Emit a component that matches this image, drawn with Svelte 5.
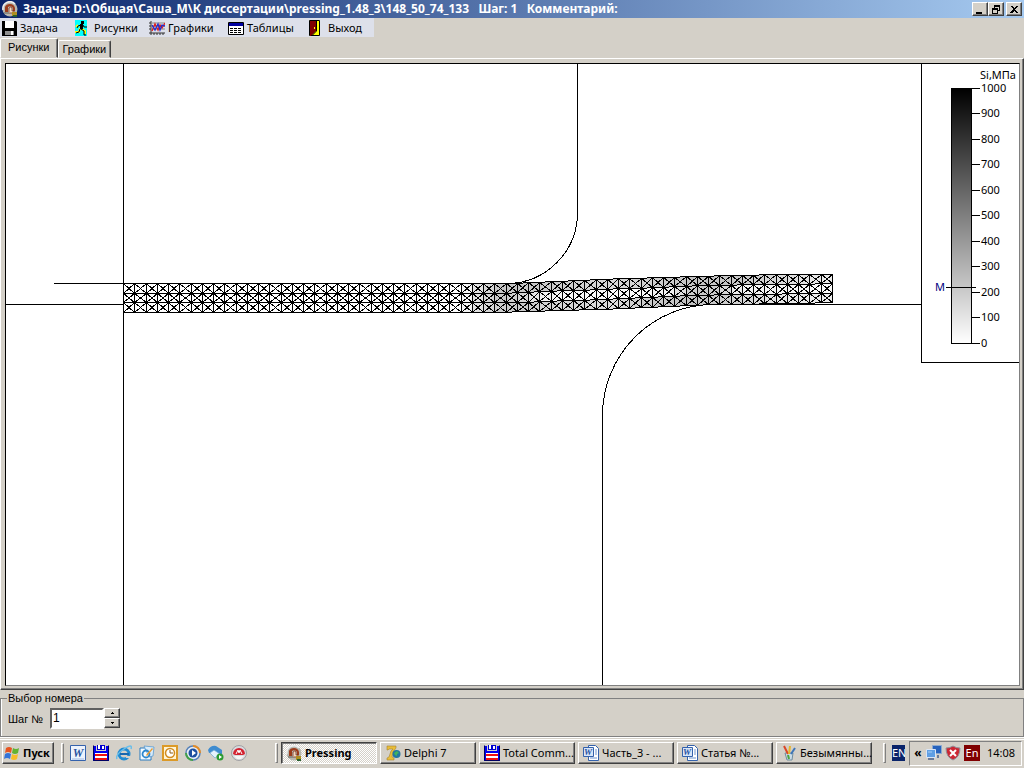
<script lang="ts">
	type Point = [number, number];

	const menu = [
		{ icon: "disk", label: "Задача" },
		{ icon: "runner", label: "Рисунки" },
		{ icon: "chart", label: "Графики" },
		{ icon: "table", label: "Таблицы" },
		{ icon: "door", label: "Выход" },
	];

	const quickLaunch = [
		{ icon: "word", label: "Microsoft Word" },
		{ icon: "commander", label: "Total Commander" },
		{ icon: "explorer", label: "Internet Explorer" },
		{ icon: "mail", label: "Outlook Express" },
		{ icon: "clock", label: "Outlook" },
		{ icon: "player", label: "Media Player" },
		{ icon: "network", label: "Network" },
		{ icon: "gauge", label: "Monitor" },
	];

	const tasks = [
		{ icon: "app", label: "Pressing" },
		{ icon: "delphi", label: "Delphi 7" },
		{ icon: "commander", label: "Total Comm..." },
		{ icon: "worddoc", label: "Часть_3 - ..." },
		{ icon: "worddoc", label: "Статья №..." },
		{ icon: "paint", label: "Безымянны..." },
	];

	let activeTab = $state("Рисунки");
	let step = $state(1);

	// Strip outline: upper and lower boundary of the blank
	const upper: Point[] = [[118, 220], [511, 220], [545, 218], [575, 217], [625, 215], [655, 214], [687, 213], [722, 212], [785, 211], [827, 211]];
	const lower: Point[] = [[118, 249], [490, 249], [530, 248], [560, 247], [595, 246], [625, 245], [655, 243], [685, 242], [715, 241], [785, 240], [827, 239]];

	// Grey level along the strip, one profile per row of elements
	const shades: Point[][] = [
		[[118, 255], [455, 255], [475, 225], [495, 198], [515, 196], [560, 205], [600, 215], [650, 207], [690, 194], [740, 200], [775, 218], [827, 236]],
		[[118, 255], [458, 255], [478, 215], [495, 200], [515, 208], [545, 248], [630, 252], [665, 240], [690, 200], [712, 202], [735, 240], [827, 250]],
		[[118, 255], [455, 255], [475, 222], [495, 205], [515, 200], [560, 212], [610, 220], [650, 200], [690, 194], [725, 205], [775, 230], [827, 238]],
	];

	const COLS = 63;
	const ROWS = 3;

	function interpolate(points: Point[], x: number) {
		for (let i = 1; i < points.length; i++) {
			const [x0, y0] = points[i - 1];
			const [x1, y1] = points[i];
			if (x <= x1) return y0 + ((y1 - y0) * (x - x0)) / (x1 - x0);
		}
		return points[points.length - 1][1];
	}

	function node(col: number, row: number): Point {
		const x = 118 + (709 * col) / COLS;
		const top = interpolate(upper, x);
		const bottom = interpolate(lower, x);
		return [Math.round(x) + 0.5, Math.round(top + ((bottom - top) * row) / ROWS) + 0.5];
	}

	const cells: { outline: string; cross: string; fill: string }[] = [];
	const joints: Point[] = [];
	for (let col = 0; col < COLS; col++) {
		for (let row = 0; row < ROWS; row++) {
			const a = node(col, row);
			const b = node(col + 1, row);
			const c = node(col + 1, row + 1);
			const d = node(col, row + 1);
			const grey = Math.round(interpolate(shades[row], (a[0] + b[0]) / 2));
			cells.push({
				outline: `M${a}L${b}L${c}L${d}Z`,
				cross: `M${a}L${c}M${b}L${d}`,
				fill: `rgb(${grey},${grey},${grey})`,
			});
			if (row > 0 && col > 0) joints.push(a);
		}
	}

	const ticks = [1000, 900, 800, 700, 600, 500, 400, 300, 200, 100, 0];
</script>

{#snippet icon(name: string)}
	<svg class="icon" viewBox="0 0 16 16" aria-hidden="true">
		{#if name === "app"}
			<circle cx="8" cy="8" r="7.5" fill="#b8b8b0" />
			<path d="M1 9a7 7 0 0 1 12-6" fill="none" stroke="#eee" stroke-width="1.5" />
			<path d="M3 12V6q1-3 5-3t5 4v3h-2V7q-2-3-5-1v6z" fill="#9c3c1c" />
			<path d="M7 11V7q2-2 3 0v3h2v2H6z" fill="#f0d8c0" stroke="#6c2010" stroke-width=".7" />
			<path d="M2 11h5v2H2z" fill="#8c8c84" />
			<path d="M10 11h5v4h-5z" fill="#b09020" />
			<path d="M11 14h4v2h-4z" fill="#286030" />
		{:else if name === "disk"}
			<path d="M1 1h14l1 1v14H1z" fill="#000" />
			<path d="M4 1h9v7H4z" fill="#fff" />
			<path d="M4 11h9v4H4z" fill="#909090" />
			<path d="M10 11h2v4h-2z" fill="#fff" />
		{:else if name === "runner"}
			<path d="M0 0h12v16H0z" fill="#0ff" />
			<path d="M3 5 1 7M5 8l-1 4H0M7 9l3 2v3" fill="none" stroke="#ff0" stroke-width="2" />
			<path d="M6 1h3v3H6zM5 4h3v5H5z" fill="#000" />
			<path d="M6 5 3 6 2 8M8 5l1 2h3M6 9l3 2v4h2M5 9l-1 3-3 1" fill="none" stroke="#000" />
		{:else if name === "chart"}
			<path d="M2 1v14M0 13h16M0 3h2M0 6h2M0 9h2M5 13v2M8 13v2M11 13v2M14 13v2" fill="none" stroke="#333" />
			<path d="M2 3h14M2 6h14M2 9h14" stroke="#888" />
			<path d="m3 11 3-7 3 6 2-5 2 3 3-5" fill="none" stroke="#e02020" stroke-width="1.4" />
			<path d="m3 5 3 5 3-6 2 6 2-5 3 1" fill="none" stroke="#2030d0" stroke-width="1.4" />
		{:else if name === "table"}
			<path d="M.5 2.5h15v12H.5z" fill="#fff" stroke="#000" />
			<path d="M1 3h14v3H1z" fill="#0000a0" />
			<path d="M2 8.5h12M2 10.5h12M2 12.5h12" stroke="#000" stroke-dasharray="3 1" />
		{:else if name === "door"}
			<path d="M.5.5h10v15H.5z" fill="#ff0" stroke="#000" />
			<path d="M1 1h6v10l-5 5H1z" fill="#800000" />
			<path d="M7.5 1v10l-5 5" fill="none" stroke="#000" />
			<path d="M5 7h1v2H5z" fill="#ff0" />
		{:else if name === "windows"}
			<path d="M2 3q3-2 6 0L7 8Q4 6 1 8z" fill="#e85520" />
			<path d="M9 3q3 2 6 0l-1 5q-3 2-6 0z" fill="#62b332" />
			<path d="M1 9q3-2 6 0l-1 5q-3-2-6 0z" fill="#3474d8" />
			<path d="M8 9q3 2 6 0l-1 5q-3 2-6 0z" fill="#f7bd28" />
		{:else if name === "word"}
			<path d="M.5.5h15v15H.5z" fill="#edf3fc" stroke="#3462ac" />
			<text x="8" y="12" class="word-mark large">W</text>
			<path d="M2 14h12" stroke="#9db9e4" />
		{:else if name === "worddoc"}
			<path d="M5.5.5h7l3 3v12h-10z" fill="#fff" stroke="#3462ac" />
			<path d="M12 5h2M12 7h2M12 9h2M7 13h7" stroke="#6f94cd" />
			<path d="M.5 2.5h10v9H.5z" fill="#d8e5f8" stroke="#3462ac" />
			<text x="5" y="10" class="word-mark">W</text>
		{:else if name === "commander"}
			<path d="M0 1h3v5h10V1h3v15H0z" fill="#0000f0" />
			<path d="M4 0h8v5H4z" fill="#0000d0" />
			<path d="M5 0h2v4H5zM9 1h2v3H9z" fill="#fff" />
			<path d="M2 8h12v8H2z" fill="#fff" />
			<path d="M2 9h12v2H2zM2 13h12v2H2z" fill="#f01010" />
			<path d="M.5.5v15h15V.5" fill="none" stroke="#000060" />
		{:else if name === "explorer"}
			<circle cx="8" cy="9" r="5" fill="none" stroke="#218bd1" stroke-width="3" />
			<path d="M4 9h9" stroke="#1767af" stroke-width="2" />
			<path d="M10 11h5v2h-5z" fill="#d4d0c8" />
			<path d="M1 14Q-1 10 8 4t7 0" fill="none" stroke="#6cbee9" stroke-width="1.5" />
		{:else if name === "mail"}
			<path d="M1 3h11v12H1z" fill="#f4faff" stroke="#287ac0" />
			<path d="m5 1 10 1-1 9-4 1z" fill="#d8ebfa" stroke="#5a9bd0" stroke-width=".8" />
			<circle cx="7" cy="9" r="3.5" fill="none" stroke="#2c86cc" stroke-width="1.8" />
			<path d="m7 10 6-7 1 1-6 7z" fill="#ec9b2e" />
		{:else if name === "clock"}
			<path d="M1 1h14v14H1z" fill="#fff4d5" stroke="#dc9a28" stroke-width="2" />
			<circle cx="8" cy="8" r="4.5" fill="#fff" stroke="#d28c20" stroke-width="1.5" />
			<path d="M8 5v3h3" fill="none" stroke="#8c5c18" />
		{:else if name === "player"}
			<circle cx="8" cy="8" r="7" fill="#e8eef6" stroke="#5681b8" stroke-width="1.5" />
			<path d="M8 1a7 7 0 0 1 7 7" fill="none" stroke="#e58c25" stroke-width="2" />
			<path d="M1 8a7 7 0 0 0 7 7" fill="none" stroke="#43a047" stroke-width="2" />
			<circle cx="8" cy="8" r="4.5" fill="#1c4fa0" />
			<path d="m7 5 4 3-4 3z" fill="#fff" />
		{:else if name === "network"}
			<path d="M0 5q3-5 8-4l6 4v4l-4 2-4-4-5 1z" fill="#3f8cd0" />
			<path d="m2 8 4-3 6 4-5 4z" fill="#e4f2fc" stroke="#6fa9d5" stroke-width=".7" />
			<circle cx="12" cy="12" r="3.5" fill="#2b9b32" />
			<path d="m11 10 3 2-3 2z" fill="#fff" />
		{:else if name === "gauge"}
			<circle cx="8" cy="8" r="7.5" fill="#d8dade" stroke="#898b90" stroke-width=".7" />
			<path d="M2 9a6 6 0 0 1 12 0l-2 1H4z" fill="#d32230" />
			<path d="m5 9 2-4 1 3 1-3 2 4" fill="none" stroke="#fff" />
			<path d="M3 11h10l-3 3H6z" fill="#f6f6f6" />
		{:else if name === "delphi"}
			<path d="M2 1h9v2L8 7l-1 5 2 1v2H2v-2l2-1 2-6 2-2H4L3 5H2z" fill="#e9bd38" stroke="#a8842c" stroke-width=".6" />
			<circle cx="11.5" cy="9" r="4" fill="#2277a0" />
			<path d="m9 8 3-2 2 2-2 1v2l-2-1z" fill="#41b35c" />
		{:else if name === "paint"}
			<path d="M4 8h8l-1 7H6z" fill="#c9dce8" stroke="#718d9e" />
			<path d="M7 9 3 1" stroke="#dc4526" stroke-width="2" />
			<path d="m8 9 1-8" stroke="#e7b52e" stroke-width="2" />
			<path d="m10 9 4-6" stroke="#3c75b9" stroke-width="2" />
			<path d="m7 10 1 4" stroke="#4ba33d" stroke-width="2" />
		{:else if name === "monitors"}
			<path d="M6.5.5h9v8h-9z" fill="#2763bd" stroke="#8caad0" />
			<path d="M.5 4.5h9v8h-9z" fill="#5f9fe4" stroke="#dbe6f5" />
			<path d="M2 14h6M12 10v3" stroke="#687a99" stroke-width="2" />
			<path d="M2 7h4" stroke="#a9d0f5" />
		{:else if name === "shield"}
			<path d="M8 1q3 2 7 2 0 9-7 12Q1 12 1 3q4 0 7-2z" fill="#cc2733" stroke="#8f929b" />
			<path d="m5 5 6 6M11 5l-6 6" stroke="#fff" stroke-width="2" />
		{/if}
	</svg>
{/snippet}

<div class="desktop">
	<header class="title-bar">
		{@render icon("app")}
		<h1>Задача: D:\Общая\Саша_М\К диссертации\pressing_1.48_3\148_50_74_133 &nbsp; Шаг: {step} &nbsp; Комментарий:</h1>
		<div class="window-buttons">
			<button type="button" aria-label="Свернуть">
				<svg viewBox="0 0 10 9"><path d="M1 7h6v2H1z" /></svg>
			</button>
			<button type="button" aria-label="Восстановить">
				<svg viewBox="0 0 10 9"><path d="M3 0h6v6H7V5h1V2H4v1H3zM1 3h6v6H1zM2 5v3h4V5z" fill-rule="evenodd" /></svg>
			</button>
			<button type="button" class="close" aria-label="Закрыть">
				<svg viewBox="0 0 10 9"><path d="M1 1h2l2 2 2-2h2L6 4l3 4H7L5 6 3 8H1l3-4z" /></svg>
			</button>
		</div>
	</header>

	<nav class="toolbar">
		{#each menu as item}
			<button type="button">{@render icon(item.icon)}<span>{item.label}</span></button>
		{/each}
	</nav>

	<div class="tabs" role="tablist">
		{#each ["Рисунки", "Графики"] as tab}
			<button
				type="button"
				role="tab"
				class:active={activeTab === tab}
				aria-selected={activeTab === tab}
				onclick={() => (activeTab = tab)}
			>{tab}</button>
		{/each}
	</div>

	<main class="panel">
		<div class="drawing">
			<svg class="model" viewBox="1 1 1013 621" preserveAspectRatio="xMinYMin slice" role="img" aria-label="Si,МПа">
				<g class="tool">
					<path d="M118.5 0V640M49 220.5H118M0 241.5H118" />
					<path d="M572.5 0V149A71 71 0 0 1 501.5 220.5" />
					<path d="M597.5 640V352A111 111 0 0 1 708.5 241.5H917" />
				</g>
				<g class="mesh">
					{#each cells as cell}
						<path d={cell.outline} fill={cell.fill} />
						<path d={cell.cross} class="cross" />
					{/each}
					{#each joints as [x, y]}
						<rect x={x - 1.5} y={y - 1.5} width="3" height="3" class="joint" />
					{/each}
				</g>
			</svg>

			<svg class="scale" viewBox="0 0 97 298">
				<defs>
					<linearGradient id="stress" x2="0" y2="1">
						<stop offset="0" stop-color="#000" />
						<stop offset="1" stop-color="#fff" />
					</linearGradient>
				</defs>
				<text x="58" y="15">Si,МПа</text>
				<rect x="29.5" y="24.5" width="20" height="255" fill="url(#stress)" stroke="#000" />
				{#each ticks as value, i}
					<path d="M50 {Math.floor(24 + i * 25.5) + 0.5}h8" stroke="#000" />
					<text x="59" y={Math.floor(28 + i * 25.5)}>{value}</text>
				{/each}
				<path d="M24 223.5h30" stroke="#000" />
				<text x="13" y="227" class="marker">М</text>
			</svg>
		</div>
	</main>

	<fieldset class="step">
		<legend>Выбор номера</legend>
		<label for="step">Шаг №</label>
		<input id="step" type="text" bind:value={step} />
		<div class="spinner">
			<button type="button" aria-label="Больше" onclick={() => (step = Number(step) + 1)}>
				<svg viewBox="0 0 5 3"><path d="M2 0h1v1h1v1H1V1h1z" /></svg>
			</button>
			<button type="button" aria-label="Меньше" onclick={() => (step = Number(step) - 1)}>
				<svg viewBox="0 0 5 3"><path d="M1 0h3v1H3v1H2V1H1z" /></svg>
			</button>
		</div>
	</fieldset>

	<footer class="taskbar">
		<button type="button" class="start">{@render icon("windows")}<span>Пуск</span></button>
		<i class="grip"></i>
		<div class="quick">
			{#each quickLaunch as item}
				<button type="button" aria-label={item.label}>{@render icon(item.icon)}</button>
			{/each}
		</div>
		<i class="grip"></i>
		<div class="tasks">
			{#each tasks as task, i}
				<button type="button" class:pressed={i === 0}>{@render icon(task.icon)}<span>{task.label}</span></button>
			{/each}
		</div>
		<i class="grip"></i>
		<span class="lang">EN</span>
		<div class="tray">
			<span class="chevron">«</span>
			{@render icon("monitors")}
			{@render icon("shield")}
			<span class="layout">En</span>
			<time>14:08</time>
		</div>
	</footer>
</div>

<style>
	:global(body) {
		margin: 0;
		background: #d4d0c8;
	}

	.desktop {
		display: flex;
		flex-direction: column;
		min-height: 100vh;
		background: #d4d0c8;
		color: #000;
		font: 11px/14px "Noto Sans", sans-serif;
	}

	.desktop * {
		box-sizing: border-box;
	}

	button {
		margin: 0;
		padding: 0;
		border: 0;
		background: none;
		color: inherit;
		font: inherit;
		white-space: nowrap;
	}

	.icon {
		display: block;
		flex: none;
		width: 16px;
		height: 16px;
	}

	.word-mark {
		fill: #2853a0;
		font: italic bold 9px "Liberation Serif", serif;
		text-anchor: middle;
	}

	.word-mark.large {
		font-size: 12px;
	}

	.title-bar {
		display: flex;
		align-items: center;
		gap: 5px;
		height: 18px;
		padding: 0 2px;
		background: linear-gradient(90deg, #0a246a, #a6caf0);
		color: #fff;
	}

	h1 {
		flex: 1;
		margin: 0;
		font-size: 12px;
		font-weight: bold;
		line-height: 18px;
		white-space: nowrap;
	}

	.window-buttons {
		display: flex;
	}

	.window-buttons button {
		display: grid;
		place-items: center;
		width: 16px;
		height: 14px;
	}

	.window-buttons svg {
		width: 10px;
		height: 9px;
		shape-rendering: crispEdges;
	}

	.window-buttons .close {
		margin-left: 2px;
	}

	.window-buttons button,
	.spinner button,
	.start,
	.tasks button {
		border: 1px solid;
		border-color: #fff #404040 #404040 #fff;
		background: #d4d0c8;
		box-shadow: inset -1px -1px #808080;
	}

	.toolbar {
		display: grid;
		grid-template-columns: 74px 74px 79px 81px 66px;
		align-self: flex-start;
		height: 19px;
		background: #dde0ea;
	}

	.toolbar button {
		display: flex;
		align-items: center;
		gap: 3px;
		padding-left: 1px;
	}

	.tabs {
		display: flex;
		align-items: flex-end;
		height: 21px;
	}

	.tabs button {
		height: 18px;
		padding: 0 4px;
		border: 1px solid;
		border-color: #fff #404040 transparent #fff;
		border-radius: 2px 2px 0 0;
		box-shadow: inset -1px 0 #808080;
		font: 11px/14px "Liberation Sans", sans-serif;
	}

	.tabs .active {
		height: 20px;
		padding: 0 7px 2px;
	}

	.panel {
		display: flex;
		flex: 1;
		padding: 4px 3px 3px 4px;
		border: 1px solid;
		border-color: #fff #404040 #404040 #fff;
		box-shadow: inset -1px -1px #808080;
	}

	.drawing {
		position: relative;
		flex: 1;
		overflow: hidden;
		border: 1px solid;
		border-color: #000 #808080 #808080 #000;
		background: #fff;
	}

	.model {
		display: block;
		width: 100%;
		height: 100%;
	}

	.tool path {
		fill: none;
		stroke: #000;
		shape-rendering: crispEdges;
	}

	.mesh path {
		stroke: #000;
		shape-rendering: crispEdges;
	}

	.mesh .cross {
		fill: none;
	}

	.joint {
		fill: #000;
	}

	.scale {
		position: absolute;
		top: 0;
		right: 0;
		width: 98px;
		height: 299px;
		border: solid #000;
		border-width: 0 0 1px 1px;
		background: #fff;
		font-size: 11px;
	}

	.marker {
		fill: #000080;
	}

	.step {
		display: flex;
		align-items: flex-start;
		gap: 7px;
		height: 46px;
		margin: 1px 0 0;
		padding: 3px 6px 0;
		border: 1px solid #808080;
		box-shadow: inset 1px 0 #fff, 0 1px #fff;
	}

	.step legend,
	.step label {
		font: 11px/14px "Liberation Sans", sans-serif;
	}

	.step legend {
		padding: 0 1px;
	}

	.step label {
		padding: 4px 0 0 1px;
	}

	.step input {
		width: 54px;
		height: 21px;
		padding: 0 1px 2px;
		border: 2px solid;
		border-color: #606060 #fff #fff #606060;
		background: #fff;
		font: 12px/14px "Liberation Sans", sans-serif;
	}

	.spinner {
		display: grid;
		margin-left: -7px;
	}

	.spinner button {
		display: grid;
		place-items: center;
		width: 16px;
		height: 10px;
	}

	.spinner svg {
		width: 5px;
		height: 3px;
	}

	.taskbar {
		display: flex;
		align-items: center;
		height: 30px;
		margin-top: 2px;
		padding: 0 2px 3px;
		border-top: 1px solid #fff;
	}

	.start {
		display: flex;
		align-items: center;
		gap: 3px;
		width: 52px;
		height: 22px;
		padding-left: 1px;
		font-weight: bold;
	}

	.grip {
		width: 3px;
		height: 20px;
		margin: 0 3px 0 7px;
		border: 1px solid;
		border-color: #fff #808080 #808080 #fff;
	}

	.quick {
		display: flex;
		gap: 7px;
		width: 201px;
		padding-left: 3px;
	}

	.tasks {
		display: flex;
		flex: 1;
		gap: 3px;
	}

	.tasks button {
		display: flex;
		align-items: center;
		gap: 3px;
		width: 96px;
		height: 22px;
		padding-left: 4px;
	}

	.tasks .pressed {
		border-color: #404040 #fff #fff #404040;
		background: repeating-conic-gradient(#fff 0 25%, #d4d0c8 0 50%) 0 0 / 2px 2px;
		box-shadow: inset 1px 1px #808080;
		font-weight: bold;
	}

	.lang {
		width: 13px;
		margin-left: 3px;
		overflow: hidden;
		background: #0a246a;
		color: #fff;
		line-height: 16px;
	}

	.tray {
		display: flex;
		align-items: center;
		gap: 3px;
		width: 113px;
		height: 25px;
		margin-left: 4px;
		padding: 0 3px;
		border: 1px solid;
		border-color: #808080 #fff #fff #808080;
	}

	.chevron {
		width: 10px;
		font-size: 12px;
		font-weight: bold;
		text-align: center;
	}

	.layout {
		width: 16px;
		background: #800000;
		color: #fff;
		line-height: 16px;
		text-align: center;
	}

	time {
		margin-left: 4px;
	}
</style>
